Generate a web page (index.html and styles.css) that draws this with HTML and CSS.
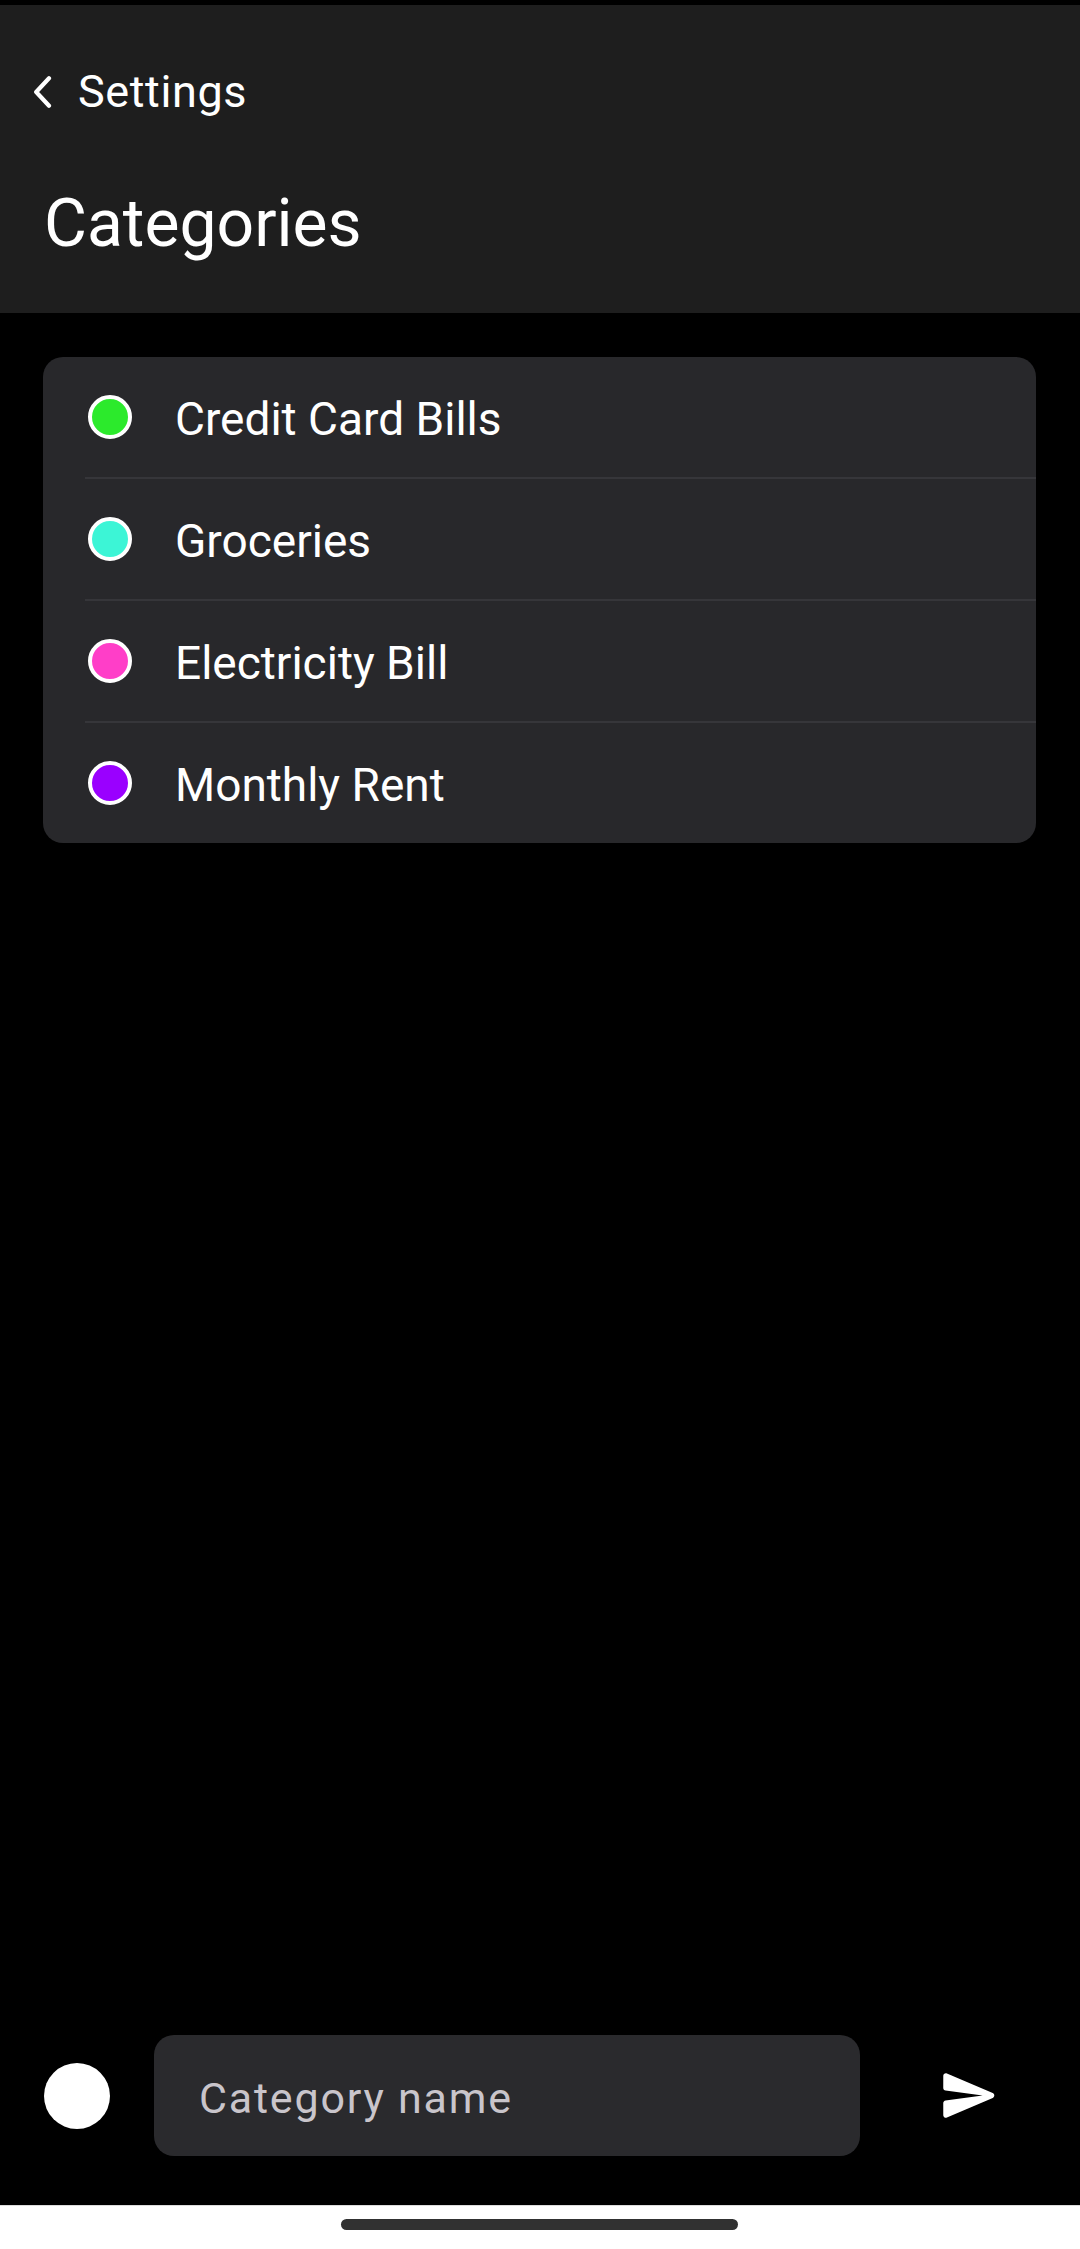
FILE: index.html
```html
<!DOCTYPE html>
<html lang="en">
<head>
<meta charset="utf-8">
<title>Categories</title>
<link rel="stylesheet" href="styles.css">
</head>
<body>
<div class="screen">
  <div class="status"></div>
  <header class="header">
    <div class="back">
      <svg class="chevron" width="21" height="32" viewBox="0 0 21 32" aria-hidden="true">
        <path d="M17 2.3 L4.2 16 L17 29.7" fill="none" stroke="#fff" stroke-width="4.2" stroke-linecap="round" stroke-linejoin="round"/>
      </svg>
      <span class="back-label">Settings</span>
    </div>
    <h1 class="title">Categories</h1>
  </header>
  <main class="main">
    <div class="card">
      <div class="row"><span class="dot dot-green"></span><span class="label">Credit Card Bills</span></div>
      <div class="divider"></div>
      <div class="row"><span class="dot dot-cyan"></span><span class="label">Groceries</span></div>
      <div class="divider"></div>
      <div class="row"><span class="dot dot-pink"></span><span class="label">Electricity Bill</span></div>
      <div class="divider"></div>
      <div class="row"><span class="dot dot-purple"></span><span class="label">Monthly Rent</span></div>
    </div>
  </main>
  <div class="composer">
    <span class="color-pick"></span>
    <div class="input"><span class="placeholder">Category name</span></div>
    <div class="send">
      <svg width="63" height="63" viewBox="0 0 24 24" aria-hidden="true">
        <path fill="#fff" d="M3.4 20.4l17.45-7.48c.81-.35.81-1.49 0-1.84L3.4 3.6c-.66-.29-1.39.2-1.39.91L2 9.12c0 .5.37.93.87.99L17 12 2.87 13.88c-.5.07-.87.5-.87 1l.01 4.61c0 .71.73 1.2 1.39.91z"/>
      </svg>
    </div>
  </div>
  <div class="navbar"><span class="pill"></span></div>
</div>
</body>
</html>
```
FILE: styles.css
```css
* { box-sizing: border-box; }
html, body { margin: 0; padding: 0; }
body {
  background: #000;
  font-family: Roboto, "Noto Sans", "Liberation Sans", sans-serif;
  color: #fff;
}
.screen {
  width: 1080px;
  height: 2249px;
  display: flex;
  flex-direction: column;
  background: #000;
}
.status { height: 5px; flex: none; background: #000; }
.header {
  flex: none;
  height: 308px;
  background: #1e1e1e;
  padding: 57px 0 0 0;
}
.back {
  display: flex;
  align-items: center;
  height: 60px;
  padding-left: 32px;
}
.chevron { display: block; margin-right: 25px; }
.back-label {
  font-size: 45px;
  line-height: 60px;
  letter-spacing: 0.6px;
}
.title {
  margin: 62px 0 0 0;
  padding-left: 44px;
  font-size: 66px;
  line-height: 80px;
  font-weight: 400;
}
.main {
  flex: 1;
  padding: 44px 44px 0 43px;
}
.card {
  background: #28282b;
  border-radius: 20px;
  overflow: hidden;
}
.row {
  display: flex;
  align-items: center;
  height: 120px;
  padding-left: 45px;
}
.divider {
  height: 2px;
  margin-left: 42px;
  background: #36363a;
}
.dot {
  width: 44px;
  height: 44px;
  border-radius: 50%;
  border: 4px solid #fff;
  flex: none;
  margin-right: 43px;
}
.dot-green { background: #2cea2c; }
.dot-cyan { background: #3cf5d6; }
.dot-pink { background: #ff3ec8; }
.dot-purple { background: #9a00ff; }
.label {
  font-size: 46px;
  line-height: 60px;
  position: relative;
  top: 2px;
}
.composer {
  flex: none;
  display: flex;
  align-items: center;
  padding: 0 0 49px 44px;
}
.color-pick {
  width: 66px;
  height: 66px;
  border-radius: 50%;
  background: #fff;
  flex: none;
  margin-right: 44px;
}
.input {
  width: 706px;
  height: 121px;
  background: #2a2a2d;
  border-radius: 20px;
  display: flex;
  align-items: center;
  padding-left: 45px;
}
.placeholder {
  font-size: 43px;
  letter-spacing: 1.8px;
  color: #c9c5cb;
  position: relative;
  top: 2px;
}
.send {
  width: 218px;
  display: flex;
  justify-content: center;
  align-items: center;
}
.send svg { display: block; }
.navbar {
  flex: none;
  height: 44px;
  background: #fff;
  border-top: 1px solid #dcdcdc;
  display: flex;
  justify-content: center;
  padding-top: 13px;
}
.pill {
  width: 397px;
  height: 11px;
  border-radius: 6px;
  background: #313131;
  position: relative;
  left: -1px;
}
```
